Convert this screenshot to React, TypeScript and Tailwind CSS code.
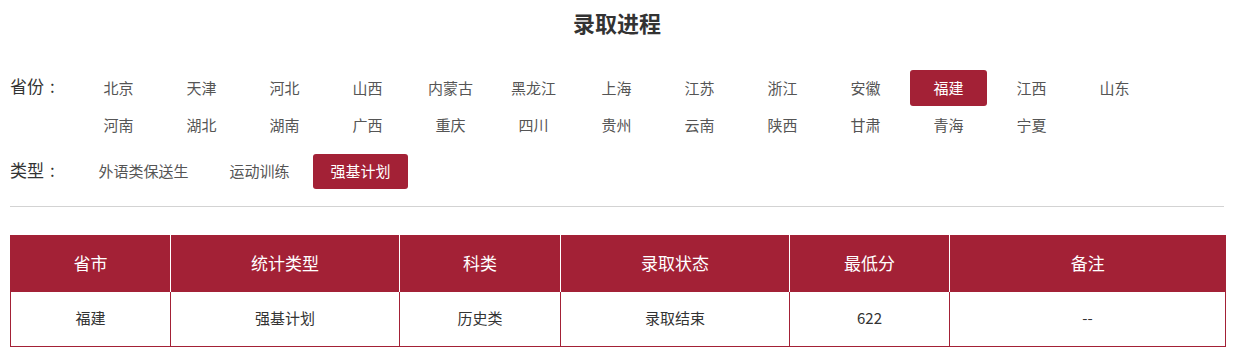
import { useState } from "react"

const provinces = [
  "北京", "天津", "河北", "山西", "内蒙古", "黑龙江", "上海", "江苏", "浙江", "安徽", "福建", "江西", "山东",
  "河南", "湖北", "湖南", "广西", "重庆", "四川", "贵州", "云南", "陕西", "甘肃", "青海", "宁夏",
]

const types = ["外语类保送生", "运动训练", "强基计划"]

const columns = [
  { title: "省市", width: "w-[160px]" },
  { title: "统计类型", width: "w-[229px]" },
  { title: "科类", width: "w-[161px]" },
  { title: "录取状态", width: "w-[229px]" },
  { title: "最低分", width: "w-[160px]" },
  { title: "备注", width: "w-[276px]" },
]

const rows = [["福建", "强基计划", "历史类", "录取结束", "622", "--"]]

export default function App() {
  const [province, setProvince] = useState("福建")
  const [type, setType] = useState("强基计划")

  return (
    <div className="w-[1234px] h-[355px] bg-white px-[10px] font-['Microsoft_YaHei','Noto_Sans_CJK_SC',sans-serif] text-[#333]">
      {/* 标题 */}
      <div className="h-[44px] flex items-center justify-center">
        <h2 className="text-[22px] font-bold text-[#333] leading-none">录取进程</h2>
      </div>

      {/* 省份 */}
      <div className="flex mt-[26px]">
        <div className="w-[70px] shrink-0 text-[17px] leading-[32px] text-[#333]">
          省份<span className="ml-[6px]">:</span>
        </div>
        <div className="flex flex-wrap flex-1">
          {provinces.map((p) => (
            <button
              key={p}
              onClick={() => setProvince(p)}
              className={
                p === province
                  ? "w-[77px] h-[36px] mr-[6px] mb-[1px] rounded-[3px] bg-[#a32136] text-white text-[15px]"
                  : "w-[77px] h-[36px] mr-[6px] mb-[1px] rounded-[3px] text-[#555] text-[15px]"
              }
            >
              {p}
            </button>
          ))}
        </div>
      </div>

      {/* 类型 */}
      <div className="flex mt-[10px]">
        <div className="w-[70px] shrink-0 text-[17px] leading-[32px] text-[#333]">
          类型<span className="ml-[6px]">:</span>
        </div>
        <div className="flex flex-wrap flex-1 gap-[6px] pl-[1px]">
          {types.map((t) => (
            <button
              key={t}
              onClick={() => setType(t)}
              className={
                t === type
                  ? "h-[35px] px-[17.5px] rounded-[3px] bg-[#a32136] text-white text-[15px]"
                  : "h-[35px] px-[17.5px] rounded-[3px] text-[#555] text-[15px]"
              }
            >
              {t}
            </button>
          ))}
        </div>
      </div>

      <div className="mt-[17px] border-t border-[#d3d3d3]" />

      {/* 表格 */}
      <table className="mt-[28px] w-[1215px] table-fixed border-collapse">
        <colgroup>
          {columns.map((c) => (
            <col key={c.title} className={c.width} />
          ))}
        </colgroup>
        <thead>
          <tr className="bg-[#a32136]">
            {columns.map((c, i) => (
              <th
                key={c.title}
                className={
                  i === 0
                    ? "h-[56px] font-normal text-[17px] text-white border-l border-[#a32136]"
                    : "h-[56px] font-normal text-[17px] text-white border-l border-white"
                }
              >
                {c.title}
              </th>
            ))}
          </tr>
        </thead>
        <tbody>
          {rows.map((r, ri) => (
            <tr key={ri}>
              {r.map((cell, ci) => (
                <td key={ci} className="h-[55px] text-center text-[15px] text-[#333] border border-[#a32136]">
                  {cell}
                </td>
              ))}
            </tr>
          ))}
        </tbody>
      </table>
    </div>
  )
}
